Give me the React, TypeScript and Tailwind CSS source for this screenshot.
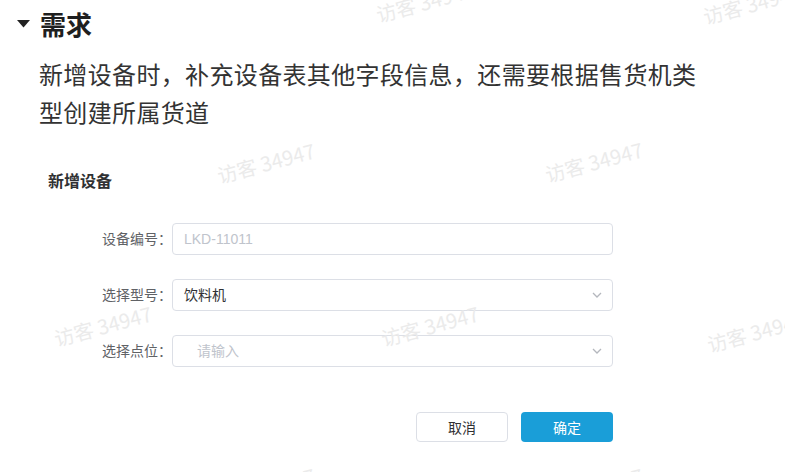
import React from "react";

function Chevron() {
  return (
    <svg width="10" height="6" viewBox="0 0 10 6" className="shrink-0">
      <polyline points="1,1 5,5 9,1" fill="none" stroke="#b4b7bd" strokeWidth="1.3" />
    </svg>
  );
}

function Mark({ cls }: { cls: string }) {
  return (
    <span
      className={
        "pointer-events-none absolute -translate-x-1/2 -translate-y-1/2 -rotate-15 whitespace-nowrap text-[20px] leading-none text-[#ebebeb] " +
        cls
      }
    >
      访客 34947
    </span>
  );
}

export default function App() {
  return (
    <div
      className="relative h-[472px] w-[785px] overflow-hidden bg-white"
      style={{ fontFamily: '"Noto Sans CJK SC", "Noto Sans", sans-serif' }}
    >
      {/* Heading */}
      <div className="flex items-center pt-[6px] pl-[17px]">
        <svg width="13" height="8" viewBox="0 0 13 8" className="mr-[10px]">
          <polygon points="0,0 13,0 6.5,7.5" fill="#222" />
        </svg>
        <h2 className="text-[26px] font-bold leading-[36px] text-[#1f1f1f]">需求</h2>
      </div>

      {/* Paragraph */}
      <p className="mt-[13px] w-[700px] pl-[39px] text-[24px] leading-[38px] tracking-[0.35px] text-[#333]">
        新增设备时，补充设备表其他字段信息，还需要根据售货机类型创建所属货道
      </p>

      {/* Form */}
      <div className="pl-[48px] pt-[37px]">
        <div className="text-[16px] font-bold leading-[24px] text-[#303133]">新增设备</div>
      </div>

      <div className="mt-[31px] flex flex-col gap-[24px]" style={{ fontFamily: '"Liberation Sans", "Noto Sans CJK SC", sans-serif' }}>
        <div className="flex items-center">
          <label className="w-[172px] pr-0 text-right text-[14px] text-[#606266]">设备编号：</label>
          <div className="flex h-[32px] w-[441px] items-center rounded-[4px] border border-[#dcdfe6] px-[11px] text-[14px] text-[#c0c4cc]">
            LKD-11011
          </div>
        </div>
        <div className="flex items-center">
          <label className="w-[172px] text-right text-[14px] text-[#606266]">选择型号：</label>
          <div className="flex h-[32px] w-[441px] items-center justify-between rounded-[4px] border border-[#dcdfe6] pl-[11px] pr-[10px] text-[14px] text-[#303133]">
            <span>饮料机</span>
            <Chevron />
          </div>
        </div>
        <div className="flex items-center">
          <label className="w-[172px] text-right text-[14px] text-[#606266]">选择点位：</label>
          <div className="flex h-[32px] w-[441px] items-center justify-between rounded-[4px] border border-[#dcdfe6] pl-[24px] pr-[10px] text-[14px] text-[#c0c4cc]">
            <span>请输入</span>
            <Chevron />
          </div>
        </div>
      </div>

      <div className="mt-[45px] flex w-[613px] justify-end gap-[13px]" style={{ fontFamily: '"Noto Sans CJK SC", sans-serif' }}>
        <button className="h-[30px] w-[92px] rounded-[4px] border border-[#dcdfe6] bg-white text-[14px] text-[#303133]">
          取消
        </button>
        <button className="h-[30px] w-[92px] rounded-[4px] bg-[#1a9ed8] text-[14px] text-white">
          确定
        </button>
      </div>

      {/* Watermarks */}
      <Mark cls="left-[425px] top-[2px]" />
      <Mark cls="left-[752px] top-[4px]" />
      <Mark cls="left-[266px] top-[163px]" />
      <Mark cls="left-[594px] top-[162px]" />
      <Mark cls="left-[103px] top-[326px]" />
      <Mark cls="left-[430px] top-[326px]" />
      <Mark cls="left-[756px] top-[332px]" />
      <Mark cls="left-[266px] top-[488px]" />
      <Mark cls="left-[594px] top-[488px]" />
    </div>
  );
}
